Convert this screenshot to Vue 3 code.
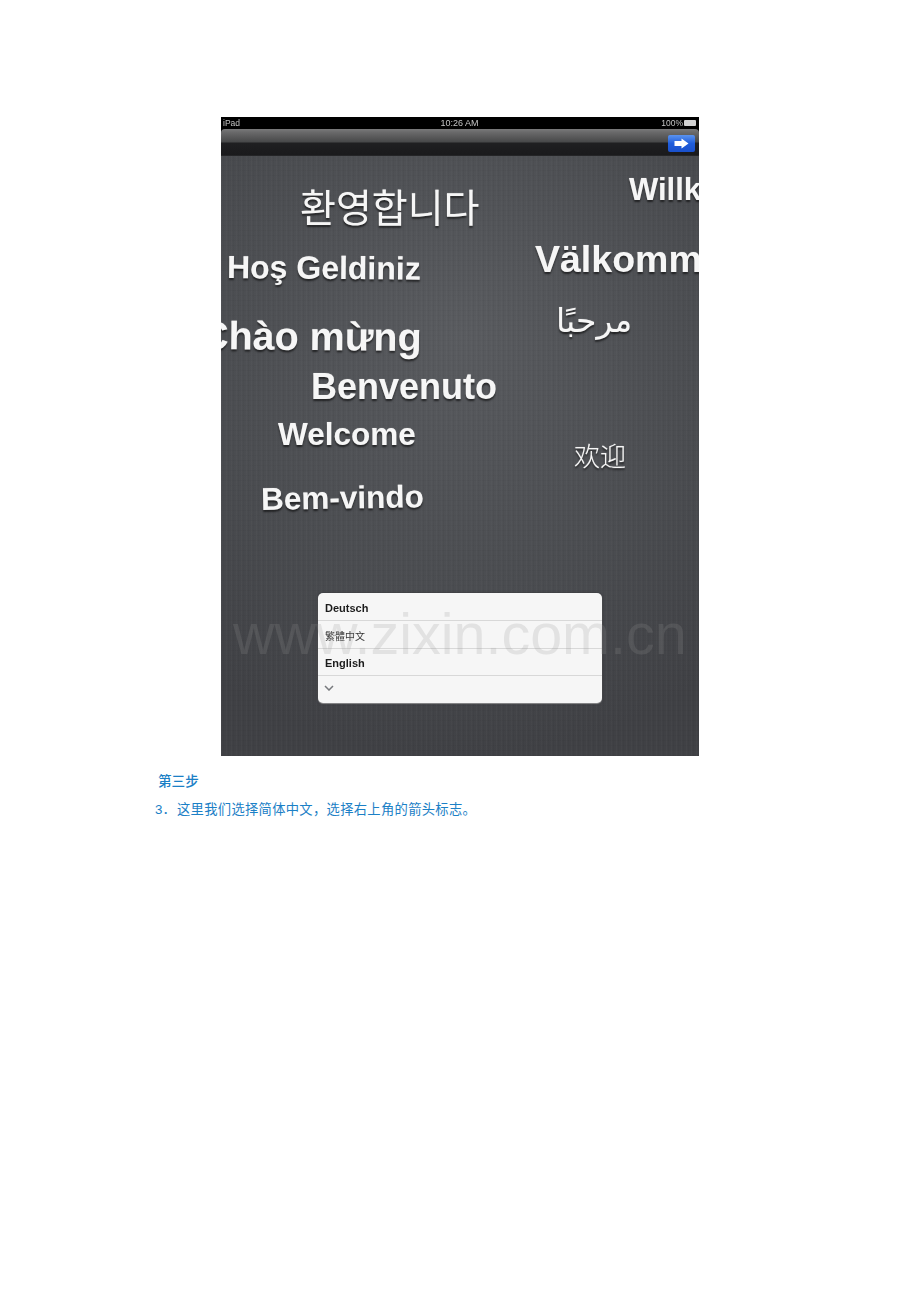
<script setup>
const words = [
  { text: "환영합니다", cls: "ko", x: 79, y: 26, size: 39, rot: 0 },
  { text: "Willk", cls: "", x: 408, y: 15, size: 31, rot: 0 },
  { text: "Hoş Geldiniz", cls: "", x: 6, y: 92, size: 32, rot: 0.5 },
  { text: "Välkomm", cls: "", x: 314, y: 81, size: 37.5, rot: 0 },
  { text: "Chào mừng", cls: "", x: -21, y: 156, size: 39.5, rot: 0.5 },
  { text: "Benvenuto", cls: "", x: 90, y: 209, size: 36, rot: 0 },
  { text: "Welcome", cls: "", x: 57, y: 260, size: 31.5, rot: 0 },
  { text: "Bem-vindo", cls: "", x: 40, y: 325, size: 31.5, rot: -1 },
  { text: "مرحبًا", cls: "ar", x: 335, y: 145, size: 33, rot: 0 },
  { text: "欢迎", cls: "zh", x: 353, y: 283, size: 26, rot: 0 },
];
const langs = [
  { text: "Deutsch", cls: "" },
  { text: "繁體中文", cls: "thin" },
  { text: "English", cls: "" },
];
</script>

<template>
  <div class="page">
    <div class="screen">
      <div class="status">
        <span class="side">iPad</span>
        <span class="time">10:26 AM</span>
        <span class="side battery">100%<i class="cell"></i></span>
      </div>
      <div class="nav">
        <div class="nextBtn">
          <svg width="15" height="11" viewBox="0 0 15 11">
            <path d="M0.5 3H7.5V0.5L14.5 5.5L7.5 10.5V8H0.5Z" fill="#fff" />
          </svg>
        </div>
      </div>
      <div class="wall">
        <span
          v-for="w in words"
          :key="w.text"
          class="word"
          :class="w.cls"
          :style="{ left: w.x + 'px', top: w.y + 'px', fontSize: w.size + 'px', transform: 'rotate(' + w.rot + 'deg)' }"
        >{{ w.text }}</span>
        <div class="langList">
          <div v-for="l in langs" :key="l.text" class="langRow" :class="l.cls">{{ l.text }}</div>
          <div class="langRow more">
            <svg width="10" height="6" viewBox="0 0 10 6">
              <path d="M1 1L5 5L9 1" fill="none" stroke="#77797d" stroke-width="1.5" />
            </svg>
          </div>
        </div>
        <div class="mark">www.zixin.com.cn</div>
      </div>
    </div>
    <h2 class="stepTitle">第三步</h2>
    <p class="stepText"><span class="num">3．</span>这里我们选择简体中文，选择右上角的箭头标志。</p>
  </div>
</template>

<style>
body {
  background: #fff;
}
</style>

<style scoped>
.page {
  padding: 117px 0 0 155px;
  height: 1185px;
  overflow: hidden;
  font-family: "Liberation Sans", "Noto Sans CJK SC", sans-serif;
}
.screen {
  width: 478px;
  height: 639px;
  margin-left: 66px;
  display: flex;
  flex-direction: column;
  background: #000;
  overflow: hidden;
  filter: blur(0.4px);
}
.status {
  height: 12px;
  flex: none;
  display: flex;
  align-items: center;
  padding: 0 3px 0 2px;
  background: #000;
  color: #c4c4c4;
  font-size: 8.5px;
}
.side {
  flex: 1;
}
.time {
  font-size: 9px;
}
.battery {
  display: flex;
  justify-content: flex-end;
  align-items: center;
  gap: 1px;
}
.cell {
  width: 12px;
  height: 6px;
  background: #d2d2d2;
  border-radius: 1px;
}
.nav {
  height: 27px;
  flex: none;
  display: flex;
  justify-content: flex-end;
  padding: 6px 4px 0 0;
  box-sizing: border-box;
  border-radius: 4px 4px 0 0;
  background: linear-gradient(#7a7a7b 0, #6a6a6b 3px, #474849 13px, #1f1f21 14px, #1a1a1c 26px, #2e2f31 27px);
}
.nextBtn {
  width: 27px;
  height: 17px;
  display: flex;
  align-items: center;
  justify-content: center;
  border-radius: 2px;
  background: linear-gradient(#5b93ee, #1f5ddb 50%, #1a50cb);
}
.wall {
  position: relative;
  flex: 1;
  background:
    repeating-linear-gradient(90deg, rgba(255, 255, 255, 0.02) 0 1px, transparent 1px 2px, rgba(0, 0, 0, 0.03) 2px 3px, transparent 3px 5px),
    repeating-linear-gradient(0deg, rgba(0, 0, 0, 0.025) 0 1px, transparent 1px 5px),
    radial-gradient(ellipse 420px 420px at 50% 30%, #5a5c60 0, #4b4d51 60%, #404145 100%);
}
.word {
  position: absolute;
  white-space: nowrap;
  line-height: 1.2;
  font-weight: 700;
  color: #f6f6f6;
  text-shadow: 0 2px 2px rgba(0, 0, 0, 0.6), 0 0 1px rgba(255, 255, 255, 0.5);
  transform-origin: left center;
}
.ko {
  font-family: "Noto Sans CJK KR", sans-serif;
  font-weight: 400;
}
.ar {
  font-family: "DejaVu Sans", sans-serif;
  font-weight: 400;
}
.zh {
  font-family: "Noto Sans CJK SC", sans-serif;
  font-weight: 300;
}
.langList {
  position: absolute;
  left: 97px;
  top: 437px;
  width: 284px;
  height: 110px;
  background: #f6f6f6;
  border-radius: 5px;
  box-shadow: 0 1px 1px #8c8c8e, 0 0 3px #333338;
  display: flex;
  flex-direction: column;
}
.langRow {
  flex: 1;
  display: flex;
  align-items: center;
  padding: 3px 0 0 7px;
  border-bottom: 1px solid #d8d8d8;
  font-size: 11px;
  font-weight: 700;
  color: #1c1c1c;
}
.thin {
  font-weight: 400;
  font-size: 10px;
  color: #333;
}
.more {
  border-bottom: none;
  padding: 0 0 3px 6px;
}
.mark {
  position: absolute;
  left: 12px;
  top: 444px;
  white-space: nowrap;
  font-size: 57.5px;
  line-height: 68px;
  color: rgba(150, 150, 150, 0.2);
}
.stepTitle {
  margin: 17px 0 0 3px;
  font-size: 13.6px;
  line-height: 18px;
  font-weight: 500;
  color: #1b80c6;
}
.stepText {
  margin: 10px 0 0;
  font-size: 13.3px;
  letter-spacing: 0.3px;
  line-height: 18px;
  color: #1b80c6;
}
.num {
  display: inline-block;
  width: 22px;
  letter-spacing: 0;
}
</style>
